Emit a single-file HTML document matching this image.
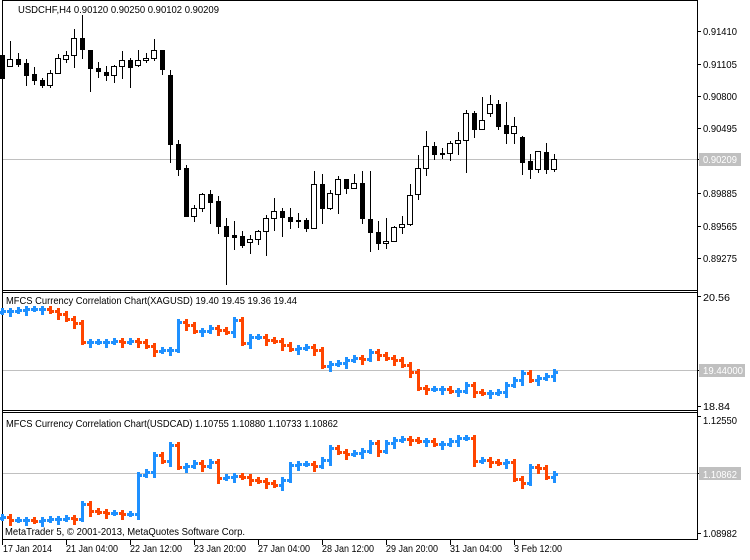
<!DOCTYPE html>
<html><head><meta charset="utf-8"><style>
html,body{margin:0;padding:0;background:#fff;width:750px;height:560px;overflow:hidden}
svg{display:block}
text{font-family:"Liberation Sans",sans-serif;font-size:10.5px;fill:#000}
</style></head><body>
<svg id="s" width="750" height="560" xmlns="http://www.w3.org/2000/svg">
<rect width="750" height="560" fill="#fff"/>
<g fill="none" stroke="#000" stroke-width="1" shape-rendering="crispEdges">
<line x1="2.5" y1="0" x2="2.5" y2="540"/>
<line x1="697.5" y1="0" x2="697.5" y2="540"/>
<line x1="2" y1="0.5" x2="698" y2="0.5"/>
<line x1="2" y1="290.5" x2="698" y2="290.5"/>
<line x1="2" y1="292.5" x2="698" y2="292.5"/>
<line x1="2" y1="410.5" x2="698" y2="410.5"/>
<line x1="2" y1="412.5" x2="698" y2="412.5"/>
<line x1="2" y1="539.5" x2="698" y2="539.5"/>
</g>
<g stroke="#c0c0c0" shape-rendering="crispEdges">
<line x1="3" y1="159.5" x2="697" y2="159.5"/>
<line x1="3" y1="370.5" x2="697" y2="370.5"/>
<line x1="3" y1="473.5" x2="697" y2="473.5"/>
</g>
<g id="main" shape-rendering="crispEdges"></g>
<g id="p2" shape-rendering="crispEdges"></g>
<g id="p3" shape-rendering="crispEdges"></g>
<g id="ax" stroke="#000" shape-rendering="crispEdges"></g>
<text x="18" y="13" textLength="201" lengthAdjust="spacingAndGlyphs">USDCHF,H4  0.90120 0.90250 0.90102 0.90209</text>
<text x="6" y="304" textLength="291" lengthAdjust="spacingAndGlyphs">MFCS Currency Correlation Chart(XAGUSD) 19.40 19.45 19.36 19.44</text>
<text x="6" y="427" textLength="332" lengthAdjust="spacingAndGlyphs">MFCS Currency Correlation Chart(USDCAD) 1.10755 1.10880 1.10733 1.10862</text>
<text x="5" y="535" textLength="240" lengthAdjust="spacingAndGlyphs">MetaTrader 5, © 2001-2013, MetaQuotes Software Corp.</text>
<g id="rl">
<text x="703" y="35">0.91410</text>
<text x="703" y="68">0.91105</text>
<text x="703" y="100">0.90800</text>
<text x="703" y="132">0.90495</text>
<rect x="699" y="153" width="42" height="13" fill="#c0c0c0"/>
<text x="703" y="163" style="fill:#fff">0.90209</text>
<text x="703" y="197">0.89885</text>
<text x="703" y="230">0.89565</text>
<text x="703" y="262">0.89275</text>
<text x="703" y="301">20.56</text>
<rect x="699" y="364" width="46" height="13" fill="#c0c0c0"/>
<text x="703" y="374" style="fill:#fff">19.44000</text>
<text x="703" y="410">18.84</text>
<text x="703" y="424">1.12550</text>
<rect x="699" y="467" width="42" height="13" fill="#c0c0c0"/>
<text x="703" y="478" style="fill:#fff">1.10862</text>
<text x="703" y="537">1.08982</text>
</g>
<text x="3" y="552" textLength="49" lengthAdjust="spacingAndGlyphs">17 Jan 2014</text>
<text x="66" y="552" textLength="52" lengthAdjust="spacingAndGlyphs">21 Jan 04:00</text>
<text x="130" y="552" textLength="52" lengthAdjust="spacingAndGlyphs">22 Jan 12:00</text>
<text x="194" y="552" textLength="52" lengthAdjust="spacingAndGlyphs">23 Jan 20:00</text>
<text x="258" y="552" textLength="52" lengthAdjust="spacingAndGlyphs">27 Jan 04:00</text>
<text x="322" y="552" textLength="52" lengthAdjust="spacingAndGlyphs">28 Jan 12:00</text>
<text x="386" y="552" textLength="52" lengthAdjust="spacingAndGlyphs">29 Jan 20:00</text>
<text x="450" y="552" textLength="52" lengthAdjust="spacingAndGlyphs">31 Jan 04:00</text>
<text x="514" y="552" textLength="48" lengthAdjust="spacingAndGlyphs">3 Feb 12:00</text>
</svg>
<script>
var NS="http://www.w3.org/2000/svg";
function el(p,t,a){var e=document.createElementNS(NS,t);for(var k in a)e.setAttribute(k,a[k]);p.appendChild(e);return e;}
var rl=document.querySelectorAll("#rl text");
for(var i=0;i<rl.length;i++){var t=rl[i].textContent;rl[i].setAttribute("textLength",t.length==5?27:(t.length==8?40:34));rl[i].setAttribute("lengthAdjust","spacingAndGlyphs");}
var C=[[2,55,78,52,80,0],[10,59,66,41,66,1],[18,59,64,53,66,0],[26,63,75,59,85,0],[34,74,80,67,84,0],[42,80,85,78,87,0],[50,73,85,70,87,1],[58,58,73,54,73,1],[66,55,59,51,62,1],[74,38,55,29,67,1],[82,38,49,15,58,0],[90,50,68,50,91,0],[98,68,71,62,77,0],[106,72,75,66,80,0],[114,66,75,65,82,1],[122,60,66,51,78,1],[130,60,67,58,87,0],[138,60,65,50,66,1],[146,58,60,53,62,1],[154,50,58,39,60,1],[162,50,69,50,74,0],[170,75,144,70,162,0],[178,144,169,140,175,0],[186,168,216,165,216,0],[194,208,216,205,221,1],[202,194,208,193,211,1],[210,194,202,190,223,0],[218,201,226,196,233,0],[226,226,236,218,284,0],[234,235,237,221,249,0],[242,236,245,231,247,0],[250,239,242,235,253,1],[258,231,239,230,244,1],[266,218,231,215,255,1],[274,211,218,198,230,1],[282,211,217,208,236,0],[290,217,221,208,228,0],[298,220,221,213,227,0],[306,220,228,218,231,0],[314,184,228,171,228,1],[322,184,208,174,223,0],[330,193,208,190,209,1],[338,179,194,176,213,1],[346,179,188,179,193,0],[354,183,188,174,188,1],[362,183,218,171,223,0],[370,219,232,171,251,0],[378,232,243,221,249,0],[386,241,243,218,248,1],[394,227,241,226,241,1],[402,224,227,216,233,1],[410,195,224,184,225,1],[418,168,194,155,199,1],[426,146,168,131,175,1],[434,146,154,142,159,0],[442,153,154,148,158,0],[450,143,153,141,160,1],[458,140,143,132,154,1],[466,113,140,110,172,1],[474,113,129,111,137,0],[482,120,129,97,129,1],[490,104,113,95,116,1],[498,104,126,100,129,0],[506,125,133,102,143,0],[514,126,133,117,143,1],[522,137,162,136,174,0],[530,161,169,154,178,0],[538,151,169,151,172,1],[546,152,169,143,173,0],[554,159,169,154,171,1]];
var g=document.getElementById("main");
C.forEach(function(c){
 el(g,"rect",{x:c[0],y:c[3],width:1,height:c[4]-c[3]+1,fill:"#000"});
 if(c[5]) el(g,"rect",{x:c[0]-2.5,y:c[1]+.5,width:5,height:Math.max(c[2]-c[1],1),fill:"#fff",stroke:"#000"});
 else el(g,"rect",{x:c[0]-2,y:c[1],width:5,height:Math.max(c[2]-c[1]+1,2),fill:"#000"});
});
function bars(id,cl,top,bot){
 var g=document.getElementById(id);
 for(var i=0;i<cl.length;i++){
  var x=2+8*i, c=cl[i], o=i?cl[i-1]:c+1;
  var h=Math.min(o,c)-3-((i*7)%7), l=Math.max(o,c)+3+((i*3)%6);
  if(h<top)h=top; if(l>bot)l=bot;
  var col=(c<=o)?"#1e90ff":"#ff4500";
  el(g,"rect",{x:x-1,y:h,width:3,height:l-h,fill:col});
  el(g,"rect",{x:x-3,y:o-1,width:2,height:3,fill:col});
  el(g,"rect",{x:x+2,y:c-1,width:2,height:3,fill:col});
 }
}
bars("p2",[311,311,310,309,309,309,311,314,319,323,342,342,342,342,341,342,341,342,346,351,350,350,322,325,331,331,328,330,332,320,343,337,337,340,341,345,349,348,347,350,366,364,363,360,358,359,352,355,358,360,365,372,388,389,389,389,391,391,385,392,393,393,392,385,380,373,380,378,376,372],306,404);
bars("p3",[517,520,520,520,521,520,519,519,518,519,504,511,512,513,513,514,514,475,472,455,461,445,467,466,463,466,462,478,477,476,477,480,481,483,485,480,465,464,464,466,460,448,452,454,453,451,443,451,443,440,439,440,441,441,444,444,441,438,438,461,460,462,463,462,479,483,467,468,477,474],430,528);
var a=document.getElementById("ax");
[2,66,130,194,258,322,386,450,514].forEach(function(x){el(a,"line",{x1:x+.5,y1:540,x2:x+.5,y2:545});});
[31,64,96,128,159,193,226,258,296,370,406,416,473,533].forEach(function(y){el(a,"line",{x1:698,y1:y+.5,x2:701,y2:y+.5});});
</script>
</body></html>
